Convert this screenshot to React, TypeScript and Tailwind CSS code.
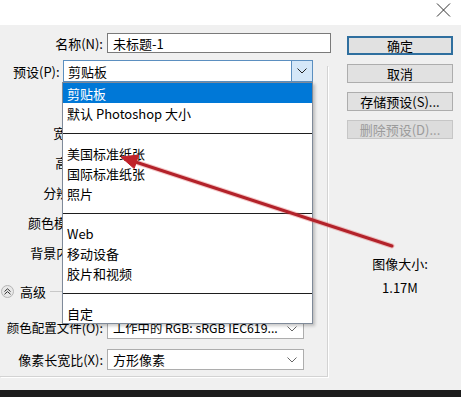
import React from 'react';

const Chevron = ({ className = '' }: { className?: string }) => (
  <svg width="10" height="6" viewBox="0 0 10 6" className={className}>
    <path d="M0.5 0.5 L5 5 L9.5 0.5" fill="none" stroke="currentColor" strokeWidth="1" />
  </svg>
);

const menuItems: (string | null)[] = [
  '剪贴板',
  '默认 Photoshop 大小',
  null,
  '美国标准纸张',
  '国际标准纸张',
  '照片',
  null,
  'Web',
  '移动设备',
  '胶片和视频',
  null,
  '自定',
];

const hiddenRows = ['宽度(W):', '高度(H):', '分辨率(R):', '颜色模式(M):', '背景内容(C):'];

export default function App() {
  return (
    <div className="relative w-[461px] h-[397px] overflow-hidden bg-[#f0f0f0] text-[13px] leading-none text-black font-['Noto_Sans_CJK_SC',sans-serif] flex flex-col">
      {/* title bar */}
      <div className="h-[25px] bg-white flex justify-end items-start pr-[10px] pt-[3px]">
        <svg width="15" height="14" viewBox="0 0 15 14" className="text-[#333]">
          <path d="M1 0.5 L14 13.5 M14 0.5 L1 13.5" stroke="currentColor" strokeWidth="1" fill="none" />
        </svg>
      </div>

      {/* dialog body */}
      <div className="relative h-[365px] flex">
        {/* left column */}
        <div className="w-[331px] flex flex-col">
          <div className="mt-[8px] h-[20px] flex items-center">
            <span className="w-[103px] text-right">名称(N):</span>
            <div className="ml-[4px] flex-1 h-[20px] border border-[#7a7a7a] bg-white flex items-center pl-[5px]">
              未标题-1
            </div>
          </div>

          {/* group box */}
          <div className="mt-[13px] w-[328px] h-[311px] border-r border-b border-[#d3d3d3] shadow-[1px_1px_0_#ffffff] flex flex-col">
            <div className="-mt-[6px] h-[22px] flex items-center">
              <span className="w-[63px] pl-[13px]">预设(P):</span>
              <div className="w-[250px] h-[22px] border border-[#5b8fc0] bg-white flex">
                <span className="flex-1 pl-[4px] flex items-center">剪贴板</span>
                <span className="w-[21px] bg-[#d4e7f8] border-l border-[#5b8fc0] flex items-center justify-center text-[#222]">
                  <Chevron />
                </span>
              </div>
            </div>

            <div className="mt-[35px] flex flex-col">
              {hiddenRows.map((label) => (
                <div key={label} className="h-[30px] flex items-center">
                  <span className="w-[103px] text-right">{label}</span>
                </div>
              ))}
            </div>

            <div className="mt-[14px] h-[20px] flex items-center">
              <span className="ml-[1px] w-[13px] h-[13px] rounded-full border border-[#b5b5b5] bg-[#e8e8e8] flex items-center justify-center">
                <svg width="7" height="7" viewBox="0 0 7 7">
                  <path d="M0.5 3.5 L3.5 0.8 L6.5 3.5 M0.5 6.3 L3.5 3.6 L6.5 6.3" stroke="#333" strokeWidth="1" fill="none" />
                </svg>
              </span>
              <span className="ml-[6px]">高级</span>
              <span className="ml-[4px] flex-1 h-px bg-[#c8c8c8] mr-[20px]" />
            </div>

            <div className="mt-[17px] h-[21px] flex items-center">
              <span className="w-[103px] text-right text-[12.5px]">颜色配置文件(O):</span>
              <div className="ml-[4px] w-[197px] h-[21px] border border-[#adadad] bg-white flex items-center pl-[5px] pr-[6px]">
                <span className="flex-1 whitespace-nowrap text-[12.3px]">工作中的 RGB: sRGB IEC619...</span>
                <Chevron className="text-[#666] ml-[2px]" />
              </div>
            </div>

            <div className="mt-[10px] h-[21px] flex items-center">
              <span className="w-[103px] text-right">像素长宽比(X):</span>
              <div className="ml-[4px] w-[197px] h-[21px] border border-[#adadad] bg-white flex items-center pl-[5px] pr-[6px]">
                <span className="flex-1">方形像素</span>
                <Chevron className="text-[#666]" />
              </div>
            </div>
          </div>
        </div>

        {/* right column */}
        <div className="ml-[16px] w-[106px] flex flex-col items-center">
          <button className="mt-[11px] w-full h-[19px] border-2 border-[#2f6f9f] bg-[#e1e1e1] flex items-center justify-center">
            确定
          </button>
          <button className="mt-[9px] w-full h-[19px] border border-[#adadad] bg-[#e1e1e1] flex items-center justify-center">
            取消
          </button>
          <button className="mt-[9px] w-full h-[19px] border border-[#adadad] bg-[#e1e1e1] flex items-center justify-center">
            存储预设(S)...
          </button>
          <button className="mt-[9px] w-full h-[19px] border border-[#c6c6c6] bg-[#dcdcdc] text-[#9b9b9b] flex items-center justify-center">
            删除预设(D)...
          </button>
          <div className="mt-[115px] h-[18px] flex items-center">图像大小:</div>
          <div className="mt-[6px] h-[18px] flex items-center">1.17M</div>
        </div>

        {/* open preset dropdown */}
        <div className="absolute left-[62px] top-[57px] w-[251px] bg-white border border-[#7f8a99] shadow-[2px_2px_3px_rgba(0,0,0,0.22)] flex flex-col">
          {menuItems.map((item, i) =>
            item === null ? (
              <div key={i} className="h-[20px] flex items-center">
                <div className="w-full h-px bg-[#1e1e1e]" />
              </div>
            ) : (
              <div
                key={i}
                className={`h-[20px] pl-[4px] flex items-center ${i === 0 ? 'bg-[#0078d7] text-white' : ''}`}
              >
                {item}
              </div>
            )
          )}
        </div>
      </div>

      <div className="h-[7px] bg-[#1c1c1c]" />

      {/* red annotation arrow */}
      <svg className="absolute left-0 top-0 pointer-events-none" width="461" height="397" viewBox="0 0 461 397">
        <line x1="392" y1="246" x2="134" y2="161.5" stroke="#e06060" strokeOpacity="0.35" strokeWidth="5" strokeLinecap="round" />
        <line x1="392" y1="246" x2="134" y2="161.5" stroke="#b3222a" strokeWidth="3" strokeLinecap="round" />
        <polygon points="121,157 138.6,155 134.2,168.5" fill="#c0222a" stroke="#c0222a" strokeWidth="1" strokeLinejoin="round" />
      </svg>
    </div>
  );
}
